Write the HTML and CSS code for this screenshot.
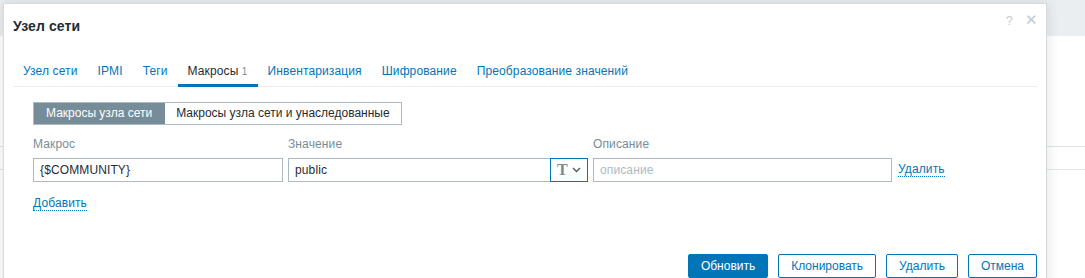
FILE: index.html
```html
<!doctype html>
<html>

<head>
    <title>Узел сети</title>
    <link rel="stylesheet" href="styles.css">
</head>

<body>
    <!-- страница под диалогом -->
    <div class="page">
        <div class="page-header"></div>
        <div class="page-body">
            <div class="page-row"></div>
            <div class="page-row"></div>
        </div>
    </div>

    <!-- диалог -->
    <div class="dialog">
        <div class="dialog-head">
            <h4 class="dialog-title">Узел сети</h4>
            <div class="dialog-tools">
                <span class="btn-help">?</span>
                <span class="btn-close">&#x2715;</span>
            </div>
        </div>

        <ul class="tabs">
            <li class="tab">Узел сети</li>
            <li class="tab">IPMI</li>
            <li class="tab">Теги</li>
            <li class="tab tab-active">Макросы <sup class="tab-count">1</sup></li>
            <li class="tab">Инвентаризация</li>
            <li class="tab">Шифрование</li>
            <li class="tab">Преобразование значений</li>
        </ul>

        <div class="form">
            <div class="segmented">
                <span class="seg seg-active">Макросы узла сети</span>
                <span class="seg">Макросы узла сети и унаследованные</span>
            </div>

            <div class="macros">
                <span class="col-label">Макрос</span>
                <span class="col-label">Значение</span>
                <span class="col-label">Описание</span>
                <span></span>

                <input class="field field-macro" value="{$COMMUNITY}">
                <div class="value-group">
                    <input class="field field-value" value="public">
                    <span class="type-btn">
                        <span class="type-t">T</span>
                        <svg width="9" height="6" viewBox="0 0 9 6"><path d="M1 1l3.5 3.5L8 1" fill="none" stroke="#4f5f66" stroke-width="1.4"/></svg>
                    </span>
                </div>
                <input class="field field-desc" placeholder="описание">
                <a class="link">Удалить</a>
            </div>

            <a class="link link-add">Добавить</a>
        </div>

        <div class="dialog-foot">
            <button class="btn btn-primary">Обновить</button>
            <button class="btn">Клонировать</button>
            <button class="btn">Удалить</button>
            <button class="btn">Отмена</button>
        </div>
    </div>
</body>

</html>
```

FILE: styles.css
```css
/* общая страница */
body {
    margin: 0;
    width: 1085px;
    height: 278px;
    overflow: hidden;
    background-color: #fff;
    font-family: "Liberation Sans", Arial, sans-serif;
    font-size: 12px;
    letter-spacing: 0.12px;
    color: #1f2c33;
}

.page {
    height: 278px;
}

.page-header {
    height: 36px;
    background-color: #ebeef0;
}

.page-body {
    padding-top: 110px;
}

.page-row {
    height: 22px;
    border-top: 1px solid #dfe4e7;
}

/* диалог */
.dialog {
    position: absolute;
    left: 3px;
    top: 3px;
    width: 1044px;
    height: 290px;
    background-color: #fff;
    border: 1px solid #d4dce0;
    box-shadow: 0 0 12px rgba(0, 0, 0, 0.12);
    padding: 0 9px;
    box-sizing: border-box;
}

.dialog-head {
    display: flex;
    justify-content: space-between;
    height: 54px;
}

.dialog-title {
    margin: 14px 0 0 0;
    font-size: 14px;
    font-weight: bold;
    color: #1f2c33;
}

.dialog-tools {
    display: flex;
    align-items: baseline;
    gap: 12px;
    padding-top: 7px;
    color: #c2c9cd;
    font-size: 15px;
}

.btn-help {
    font-size: 12px;
}

.btn-close {
    margin-right: -1px;
}

/* вкладки */
.tabs {
    display: flex;
    margin: 0;
    padding: 0;
    list-style: none;
    border-bottom: 1px solid #ebeef0;
}

.tab {
    padding: 6px 10px 6px;
    color: #0275b8;
    border-bottom: 3px solid transparent;
    margin-bottom: -1px;
}

.tab-active {
    color: #1f2c33;
    border-bottom-color: #0275b8;
}

.tab-count {
    font-size: 10px;
    color: #768d99;
    vertical-align: baseline;
}

/* форма */
.form {
    padding: 15px 20px 0;
}

.segmented {
    display: inline-flex;
    border: 1px solid #acbbc2;
    height: 21px;
    letter-spacing: 0;
}

.seg {
    padding: 0 11px;
    line-height: 21px;
}

.seg-active {
    padding: 0 13px 0 12px;
    background-color: #768d99;
    color: #fff;
}

.macros {
    display: grid;
    grid-template-columns: 250px 300px 299px auto;
    column-gap: 5px;
    align-items: center;
    margin-top: 9px;
}

.col-label {
    color: #768d99;
    height: 24px;
    line-height: 21px;
}

.field {
    height: 24px;
    box-sizing: border-box;
    border: 1px solid #acbbc2;
    padding: 0 6px;
    font-family: inherit;
    font-size: 12px;
    letter-spacing: inherit;
    color: #1f2c33;
    width: 100%;
    outline: none;
}

.field::placeholder {
    color: #acbbc2;
}

.value-group {
    display: flex;
}

.field-value {
    flex: 1;
    border-right: none;
}

.type-btn {
    display: flex;
    align-items: center;
    justify-content: center;
    gap: 4px;
    width: 38px;
    height: 24px;
    box-sizing: border-box;
    border: 1px solid #0275b8;
}

.type-t {
    font-family: "Liberation Serif", serif;
    font-weight: bold;
    font-size: 16px;
    color: #768d99;
}

.link {
    color: #0275b8;
    border-bottom: 1px dotted #0275b8;
    line-height: 13px;
    justify-self: start;
    margin-left: 1px;
}

.link-add {
    display: inline-block;
    margin-top: 15px;
    margin-left: 0;
}

/* кнопки */
.dialog-foot {
    display: flex;
    justify-content: flex-end;
    gap: 10px;
    padding: 43px 0 0 0;
}

.btn {
    height: 24px;
    padding: 0 12px;
    font-family: inherit;
    font-size: 12px;
    letter-spacing: 0;
    color: #0275b8;
    background-color: #fff;
    border: 1px solid #0275b8;
    border-radius: 2px;
}

.btn-primary {
    color: #fff;
    background-color: #0275b8;
}
```
